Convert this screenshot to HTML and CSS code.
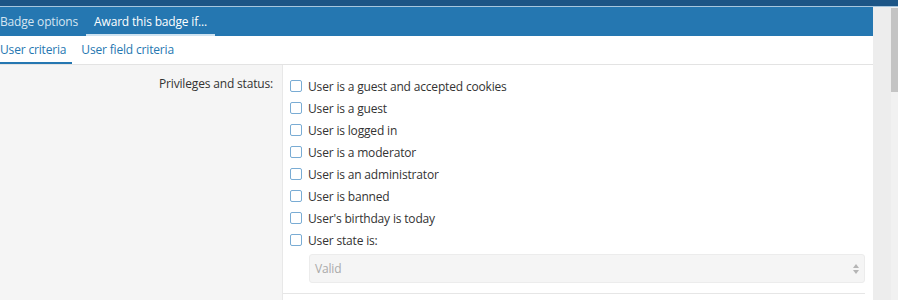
FILE: index.html
```html
<!DOCTYPE html>
<html>
<head>
    <title>Award this badge if...</title>
    <link rel="stylesheet" href="styles.css">
</head>
<body>
    <div id="top-strip"></div>

    <div id="page">
        <div id="main">
            <div class="tab-bar">
                <span class="tab">Badge options</span>
                <span class="tab active">Award this badge if...</span>
            </div>

            <div class="sub-tabs">
                <span class="sub-tab active">User criteria</span>
                <span class="sub-tab">User field criteria</span>
            </div>

            <div class="form-row">
                <div class="form-label">Privileges and status:</div>
                <div class="form-input">
                    <label class="check"><span class="box"></span>User is a guest and accepted cookies</label>
                    <label class="check"><span class="box"></span>User is a guest</label>
                    <label class="check"><span class="box"></span>User is logged in</label>
                    <label class="check"><span class="box"></span>User is a moderator</label>
                    <label class="check"><span class="box"></span>User is an administrator</label>
                    <label class="check"><span class="box"></span>User is banned</label>
                    <label class="check"><span class="box"></span>User's birthday is today</label>
                    <label class="check"><span class="box"></span>User state is:</label>
                    <div class="select">
                        <span>Valid</span>
                        <svg width="6" height="10" viewBox="0 0 6 10"><path d="M3 0 L6 4 L0 4 Z M0 6 L6 6 L3 10 Z" fill="#b5b5b5"/></svg>
                    </div>
                    <div class="row-end"></div>
                </div>
            </div>
        </div>

        <div id="gutter"></div>
        <div id="scrollbar"><div class="thumb"></div></div>
    </div>
</body>
</html>
```

FILE: styles.css
```css
body {
    margin: 0;
    padding: 0;
    font-family: "Open Sans", "Noto Sans", Arial, sans-serif;
    font-size: 12px;
    letter-spacing: -0.17px;
    background-color: #ededed;
    height: 300px;
    overflow: hidden;
}

#top-strip {
    background-color: #1c5586;
    height: 6px;
    border-bottom: 1px solid #a7c6de;
}

#page {
    display: flex;
    height: 293px;
}

#main {
    width: 873px;
    background-color: #fff;
    display: flex;
    flex-direction: column;
}

#gutter {
    width: 18px;
    background-color: #ededed;
}

#scrollbar {
    width: 7px;
    background-color: #f1f1f1;
}

#scrollbar .thumb {
    background-color: #c4c4c4;
    height: 84px;
    margin-top: 1px;
}

.tab-bar {
    background-color: #2577b1;
    height: 29px;
    display: flex;
    gap: 8px;
}

.tab {
    color: #d6e6f2;
    padding-top: 2px;
    line-height: 25px;
}

.tab.active {
    color: #fff;
    padding: 2px 8px 0 8px;
    border-bottom: 2px solid #cfe3f1;
}

.sub-tabs {
    height: 28px;
    display: flex;
    gap: 9px;
    border-bottom: 1px solid #e3e3e3;
}

.sub-tab {
    color: #2577b1;
    padding-top: 2px;
    line-height: 24px;
    padding-right: 6px;
}

.sub-tab.active {
    border-bottom: 2px solid #2577b1;
}

.form-row {
    display: flex;
    flex: 1;
}

.form-label {
    width: 283px;
    padding: 10px 9px 0 0;
    box-sizing: border-box;
    background-color: #f5f5f5;
    border-right: 1px solid #e8e8e8;
    text-align: right;
    color: #333;
}

.form-input {
    flex: 1;
    padding: 10px 8px 0 7px;
}

.check {
    display: flex;
    align-items: center;
    height: 22px;
    color: #333;
}

.box {
    width: 10px;
    height: 10px;
    border: 1px solid #79acd4;
    border-radius: 2px;
    margin-right: 6px;
}

.select {
    margin: 3px 0 0 19px;
    height: 27px;
    background-color: #f5f5f5;
    border: 1px solid #ececec;
    border-radius: 3px;
    display: flex;
    align-items: center;
    justify-content: space-between;
    padding: 0 5px;
    color: #aaa;
}

.row-end {
    border-bottom: 1px solid #e6e6e6;
    margin: 10px 0 0 -7px;
}
```
